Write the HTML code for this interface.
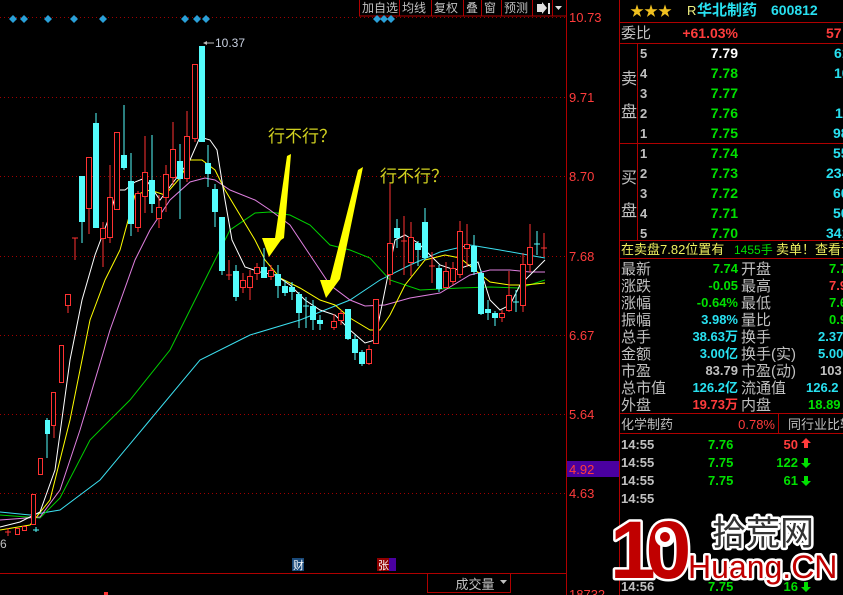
<!DOCTYPE html>
<html><head><meta charset="utf-8"><style>
html,body{margin:0;padding:0;background:#000;width:843px;height:595px;overflow:hidden}
svg{display:block}
text{font-family:"Liberation Sans","Noto Sans CJK SC",sans-serif}
.g{fill:#c0c0c0}.r{fill:#ff3c3c}.gr{fill:#00e000}.c{fill:#28e0f0}.w{fill:#fff}.y{fill:#f0f060}
</style></head><body>
<svg width="843" height="595" viewBox="0 0 843 595" xmlns="http://www.w3.org/2000/svg">
<rect width="843" height="595" fill="#000"/>
<g stroke="#a00000" stroke-dasharray="1,3" stroke-width="1">
<line x1="0" y1="17.5" x2="566" y2="17.5"/><line x1="0" y1="97.5" x2="566" y2="97.5"/>
<line x1="0" y1="176.5" x2="566" y2="176.5"/><line x1="0" y1="256.5" x2="566" y2="256.5"/>
<line x1="0" y1="335.5" x2="566" y2="335.5"/><line x1="0" y1="414.5" x2="566" y2="414.5"/>
<line x1="0" y1="493.5" x2="566" y2="493.5"/>
</g>
<line x1="566.5" y1="0" x2="566.5" y2="595" stroke="#b00000"/>
<line x1="619.5" y1="0" x2="619.5" y2="595" stroke="#b00000"/>
<line x1="0" y1="573.5" x2="566" y2="573.5" stroke="#b00000"/>
<rect x="427.5" y="573.5" width="83" height="19" fill="none" stroke="#b00000"/>
<text x="475" y="589" class="g" font-size="13" text-anchor="middle">成交量</text>
<path d="M500 580h7l-3.5 4z" fill="#c0c0c0"/>
<g stroke="#b00000" fill="#000"><rect x="359.5" y="-1" width="207" height="17"/></g>
<g stroke="#b00000"><line x1="399.5" y1="0" x2="399.5" y2="16"/><line x1="431.5" y1="0" x2="431.5" y2="16"/><line x1="463.5" y1="0" x2="463.5" y2="16"/><line x1="481.5" y1="0" x2="481.5" y2="16"/><line x1="501.5" y1="0" x2="501.5" y2="16"/><line x1="532.5" y1="0" x2="532.5" y2="16"/><line x1="552.5" y1="0" x2="552.5" y2="16"/></g>
<g class="g" font-size="12"><text x="362" y="12">加自选</text><text x="402" y="12">均线</text><text x="434" y="12">复权</text><text x="466" y="12">叠</text><text x="484" y="12">窗</text><text x="504" y="12">预测</text></g>
<path d="M537 4h5v-2l5 6l-5 6v-2h-5z M548 3h2v11h-2z" fill="#e0e0e0"/>
<path d="M555 6h7l-3.5 4z" fill="#e0e0e0"/>
<g fill="#2aa0d8">
<path d="M13 15l4 4l-4 4l-4-4z"/><path d="M24 15l4 4l-4 4l-4-4z"/><path d="M48 15l4 4l-4 4l-4-4z"/><path d="M74 15l4 4l-4 4l-4-4z"/><path d="M103 15l4 4l-4 4l-4-4z"/><path d="M185 15l4 4l-4 4l-4-4z"/><path d="M197 15l4 4l-4 4l-4-4z"/><path d="M206 15l4 4l-4 4l-4-4z"/><path d="M377 15l4 4l-4 4l-4-4z"/><path d="M384 15l4 4l-4 4l-4-4z"/><path d="M391 15l4 4l-4 4l-4-4z"/>
</g>
<g class="r" font-size="13"><text x="569" y="22">10.73</text><text x="569" y="102">9.71</text><text x="569" y="181">8.70</text><text x="569" y="261">7.68</text><text x="569" y="340">6.67</text><text x="569" y="419">5.64</text><text x="569" y="498">4.63</text></g>
<rect x="567" y="461" width="52" height="16" fill="#4a00a0"/>
<text x="569" y="474" class="r" font-size="13">4.92</text>
<text x="569" y="599" class="r" font-size="13">18732</text>
<g fill="none" stroke-width="1">
<polyline stroke="#3ce0f0" points="0,512 30,515 60,510 100,480 150,420 200,360 250,335 300,320 350,300 380,280 410,265 440,252 470,245 500,250 545,258"/>
<polyline stroke="#00d000" points="0,515 40,518 60,498 90,440 130,400 170,350 200,290 230,230 255,213 270,212 290,215 310,225 330,245 350,250 370,258 390,280 420,290 460,288 490,287 520,288 545,280"/>
<polyline stroke="#e080e0" points="0,520 40,517 60,490 80,430 110,330 135,260 150,230 170,200 190,182 205,178 215,180 230,190 255,200 270,210 290,225 310,255 330,285 350,300 365,306 385,305 410,298 440,293 470,275 490,270 510,270 530,272 545,272"/>
<polyline stroke="#ffff00" points="0,530 30,525 50,500 70,420 90,320 105,280 120,250 135,195 150,190 165,195 180,178 190,160 202,160 215,170 225,190 240,215 255,240 265,260 280,278 300,288 320,300 335,305 350,318 370,330 380,330 390,315 405,285 425,260 445,255 460,258 475,270 490,282 510,285 525,285 545,283"/>
<polyline stroke="#ffffff" points="0,527 20,522 40,512 55,470 70,360 82,300 95,255 110,215 117,190 125,190 135,182 145,178 160,200 175,180 190,160 200,137 210,140 217,150 225,200 232,240 245,267 260,272 275,275 290,285 305,300 320,310 335,315 350,330 365,343 375,340 385,290 395,240 405,235 418,243 430,255 440,265 455,270 470,265 478,262 490,300 500,310 510,305 520,285 545,260"/>
</g>
<g stroke="#ff3232" fill="#000" stroke-width="1">
<line x1="68" y1="294" x2="68" y2="313"/><rect x="65.5" y="294.5" width="5" height="11"/>
<line x1="75" y1="238" x2="75" y2="260"/><line x1="72" y1="238" x2="78" y2="238"/>
<line x1="89" y1="157" x2="89" y2="234"/><rect x="86.5" y="157.5" width="5" height="51"/>
<line x1="103" y1="222" x2="103" y2="267"/><rect x="100.5" y="228.5" width="5" height="10"/>
<line x1="110" y1="165" x2="110" y2="243"/><rect x="107.5" y="197.5" width="5" height="40"/>
<line x1="117" y1="132" x2="117" y2="209"/><rect x="114.5" y="132.5" width="5" height="77"/>
<line x1="138" y1="191" x2="138" y2="232"/><rect x="135.5" y="193.5" width="5" height="34"/>
<line x1="145" y1="136" x2="145" y2="213"/><rect x="142.5" y="172.5" width="5" height="24"/>
<line x1="159" y1="195" x2="159" y2="228"/><rect x="156.5" y="207.5" width="5" height="11"/>
<line x1="166" y1="165" x2="166" y2="212"/><rect x="163.5" y="174.5" width="5" height="23"/>
<line x1="173" y1="122" x2="173" y2="185"/><rect x="170.5" y="149.5" width="5" height="28"/>
<line x1="187" y1="111" x2="187" y2="182"/><rect x="184.5" y="136.5" width="5" height="42"/>
<line x1="195" y1="64" x2="195" y2="142"/><rect x="192.5" y="64.5" width="5" height="74"/>
<line x1="229" y1="260" x2="229" y2="280"/><line x1="226" y1="275" x2="232" y2="275"/>
<line x1="243" y1="273" x2="243" y2="293"/><rect x="240.5" y="280.5" width="5" height="7"/>
<line x1="250" y1="270" x2="250" y2="300"/><rect x="247.5" y="276.5" width="5" height="11"/>
<line x1="257" y1="263" x2="257" y2="280"/><rect x="254.5" y="267.5" width="5" height="6"/>
<line x1="271" y1="265" x2="271" y2="280"/><rect x="268.5" y="270.5" width="5" height="6"/>
<line x1="334" y1="314" x2="334" y2="330"/><rect x="331.5" y="321.5" width="5" height="6"/>
<line x1="341" y1="310" x2="341" y2="325"/><rect x="338.5" y="313.5" width="5" height="7"/>
<line x1="369" y1="345" x2="369" y2="365"/><rect x="366.5" y="349.5" width="5" height="14"/>
<rect x="373.5" y="299.5" width="5" height="44"/>
<line x1="390" y1="183" x2="390" y2="285"/><rect x="387.5" y="243.5" width="5" height="31"/>
<line x1="404" y1="216" x2="404" y2="275"/><line x1="401" y1="241" x2="407" y2="241"/>
<line x1="411" y1="222" x2="411" y2="276"/><rect x="408.5" y="237.5" width="5" height="25"/>
<line x1="432" y1="252" x2="432" y2="283"/><line x1="429" y1="266" x2="435" y2="266"/>
<line x1="446" y1="262" x2="446" y2="287"/><rect x="443.5" y="271.5" width="5" height="16"/>
<line x1="453" y1="262" x2="453" y2="285"/><rect x="450.5" y="268.5" width="5" height="13"/>
<line x1="460" y1="221" x2="460" y2="278"/><rect x="457.5" y="231.5" width="5" height="43"/>
<line x1="467" y1="224" x2="467" y2="267"/><rect x="464.5" y="244.5" width="5" height="4"/>
<line x1="502" y1="310" x2="502" y2="322"/><rect x="499.5" y="313.5" width="5" height="4"/>
<line x1="509" y1="271" x2="509" y2="312"/><rect x="506.5" y="295.5" width="5" height="15"/>
<line x1="523" y1="253" x2="523" y2="312"/><rect x="520.5" y="264.5" width="5" height="41"/>
<line x1="530" y1="224" x2="530" y2="272"/><rect x="527.5" y="247.5" width="5" height="17"/>
<line x1="544" y1="233" x2="544" y2="257"/><line x1="541" y1="248" x2="547" y2="248"/>
<rect x="31.5" y="494.5" width="4" height="30"/>
<line x1="8" y1="528" x2="8" y2="536"/><line x1="5" y1="532" x2="11" y2="532"/>
<rect x="15.5" y="528.5" width="4" height="6"/><rect x="22.5" y="526.5" width="4" height="4"/>
<rect x="38.5" y="458.5" width="4" height="16"/>
<line x1="54" y1="392" x2="54" y2="438"/><rect x="51.5" y="392.5" width="4" height="33"/>
<line x1="61" y1="345" x2="61" y2="382"/><rect x="59.5" y="345.5" width="4" height="37"/>
</g>
<g fill="#54fcfc" stroke="#54fcfc">
<line x1="47" y1="418" x2="47" y2="458"/><rect x="45.5" y="420.5" width="4" height="13"/>
<line x1="82" y1="176" x2="82" y2="243"/><rect x="79.5" y="176.5" width="5" height="45"/>
<line x1="96" y1="113" x2="96" y2="227"/><rect x="93.5" y="123.5" width="5" height="104"/>
<line x1="124" y1="105" x2="124" y2="170"/><rect x="121.5" y="155.5" width="5" height="12"/>
<line x1="131" y1="153" x2="131" y2="236"/><rect x="128.5" y="181.5" width="5" height="42"/>
<line x1="152" y1="135" x2="152" y2="213"/><rect x="149.5" y="180.5" width="5" height="23"/>
<line x1="180" y1="144" x2="180" y2="219"/><rect x="177.5" y="161.5" width="5" height="17"/>
<line x1="202" y1="46" x2="202" y2="142"/><rect x="199.5" y="46.5" width="5" height="95"/>
<line x1="208" y1="145" x2="208" y2="187"/><rect x="205.5" y="163.5" width="5" height="10"/>
<line x1="215" y1="184" x2="215" y2="227"/><rect x="212.5" y="189.5" width="5" height="22"/>
<line x1="222" y1="217" x2="222" y2="275"/><rect x="219.5" y="217.5" width="5" height="53"/>
<line x1="236" y1="265" x2="236" y2="301"/><rect x="233.5" y="271.5" width="5" height="25"/>
<line x1="264" y1="248" x2="264" y2="277"/><rect x="261.5" y="267.5" width="5" height="10"/>
<line x1="278" y1="265" x2="278" y2="298"/><rect x="275.5" y="274.5" width="5" height="11"/>
<line x1="285" y1="280" x2="285" y2="296"/><rect x="282.5" y="286.5" width="5" height="6"/>
<line x1="292" y1="282" x2="292" y2="300"/><rect x="289.5" y="287.5" width="5" height="4"/>
<line x1="299" y1="292" x2="299" y2="328"/><rect x="296.5" y="294.5" width="5" height="18"/>
<line x1="306" y1="297" x2="306" y2="328"/><line x1="303" y1="306" x2="309" y2="306"/>
<line x1="313" y1="300" x2="313" y2="330"/><rect x="310.5" y="306.5" width="5" height="13"/>
<line x1="320" y1="315" x2="320" y2="330"/><rect x="317.5" y="320.5" width="5" height="3"/>
<line x1="348" y1="309" x2="348" y2="340"/><rect x="345.5" y="309.5" width="5" height="29"/>
<line x1="355" y1="335" x2="355" y2="360"/><rect x="352.5" y="339.5" width="5" height="13"/>
<line x1="362" y1="350" x2="362" y2="366"/><rect x="359.5" y="352.5" width="5" height="11"/>
<line x1="397" y1="219" x2="397" y2="248"/><rect x="394.5" y="228.5" width="5" height="9"/>
<line x1="418" y1="241" x2="418" y2="266"/><rect x="415.5" y="243.5" width="5" height="6"/>
<line x1="425" y1="208" x2="425" y2="260"/><rect x="422.5" y="222.5" width="5" height="35"/>
<line x1="439" y1="265" x2="439" y2="292"/><rect x="436.5" y="268.5" width="5" height="20"/>
<line x1="474" y1="235" x2="474" y2="275"/><rect x="471.5" y="246.5" width="5" height="25"/>
<line x1="481" y1="270" x2="481" y2="315"/><rect x="478.5" y="273.5" width="5" height="40"/>
<line x1="488" y1="300" x2="488" y2="320"/><rect x="485.5" y="309.5" width="5" height="3"/>
<line x1="495" y1="311" x2="495" y2="326"/><rect x="492.5" y="313.5" width="5" height="4"/>
<line x1="516" y1="290" x2="516" y2="312"/><line x1="513" y1="302" x2="519" y2="302"/>
<line x1="537" y1="231" x2="537" y2="255"/><line x1="534" y1="244" x2="540" y2="244"/>
<line x1="36" y1="527" x2="36" y2="532"/><line x1="33" y1="530" x2="39" y2="530"/>
</g>
<text x="0" y="548" class="g" font-size="12">6</text>
<line x1="204" y1="43" x2="214" y2="43" stroke="#bbb"/><path d="M203 43l4-2v4z" fill="#bbb"/>
<text x="215" y="47" fill="#c8d0e0" font-size="12">10.37</text>
<polygon fill="#ffff00" points="291,154 284,238 281,240 269,257 262,238 275,238 287,156"/>
<polygon fill="#ffff00" points="363,167 340,279 326,298 320,280 330,280 358,170"/>
<text x="268" y="142" fill="#d0d020" font-size="17">行不行？</text>
<text x="380" y="182" fill="#d0d020" font-size="17">行不行？</text>
<rect x="292" y="558" width="12" height="13" fill="#1a4a7a"/><text x="293" y="569" class="w" font-size="11">财</text>
<rect x="377" y="558" width="12" height="13" fill="#900000"/><rect x="389" y="558" width="7" height="13" fill="#4a00a0"/><text x="378" y="569" class="w" font-size="11">张</text>
<rect x="104" y="592" width="4" height="3" fill="#ff3232"/>

<g fill="#f0c020"><text x="630" y="16" font-size="14">★★★</text></g>
<text x="687" y="15" fill="#f0f080" font-size="13">R</text>
<text x="697" y="15" fill="#28e0f0" font-size="15" font-weight="bold">华北制药</text>
<text x="771" y="15" fill="#28e0f0" font-size="14" font-weight="bold">600812</text>
<g stroke="#b00000"><line x1="619" y1="22.5" x2="843" y2="22.5"/><line x1="619" y1="43.5" x2="843" y2="43.5"/><line x1="619" y1="143.5" x2="843" y2="143.5"/><line x1="619" y1="240.5" x2="843" y2="240.5"/><line x1="619" y1="258.5" x2="843" y2="258.5"/><line x1="619" y1="413.5" x2="843" y2="413.5"/><line x1="619" y1="433.5" x2="843" y2="433.5"/><line x1="637.5" y1="43" x2="637.5" y2="240" /><line x1="778.5" y1="413" x2="778.5" y2="433"/></g>
<text x="621" y="38" class="g" font-size="15">委比</text>
<text x="738" y="38" class="r" font-size="14" font-weight="bold" text-anchor="end">+61.03%</text>
<text x="826" y="38" class="r" font-size="14" font-weight="bold">57</text>
<g class="g" font-size="16"><text x="621" y="84">卖</text><text x="621" y="117">盘</text><text x="621" y="183">买</text><text x="621" y="216">盘</text></g>
<g class="g" font-size="13" font-weight="bold">
<text x="640" y="58">5</text><text x="640" y="78">4</text><text x="640" y="98">3</text><text x="640" y="118">2</text><text x="640" y="138">1</text>
<text x="640" y="158">1</text><text x="640" y="178">2</text><text x="640" y="198">3</text><text x="640" y="218">4</text><text x="640" y="238">5</text></g>
<g font-size="14" font-weight="bold" text-anchor="end">
<text x="738" y="58" class="w">7.79</text><text x="738" y="78" class="gr">7.78</text><text x="738" y="98" class="gr">7.77</text><text x="738" y="118" class="gr">7.76</text><text x="738" y="138" class="gr">7.75</text>
<text x="738" y="158" class="gr">7.74</text><text x="738" y="178" class="gr">7.73</text><text x="738" y="198" class="gr">7.72</text><text x="738" y="218" class="gr">7.71</text><text x="738" y="238" class="gr">7.70</text></g>
<g font-size="14" font-weight="bold" class="c">
<text x="834" y="58">61</text><text x="834" y="78">10</text><text x="835" y="118">11</text><text x="833" y="138">98</text>
<text x="833" y="158">55</text><text x="826" y="178">234</text><text x="833" y="198">60</text><text x="833" y="218">50</text><text x="826" y="238">341</text></g>
<text x="621" y="254" class="y" font-size="13">在卖盘7.82位置有</text>
<text x="734" y="254" class="gr" font-size="12">1455手</text>
<text x="776" y="254" class="y" font-size="13">卖单！查看详</text>
<g class="g" font-size="15">
<text x="621" y="274">最新</text><text x="621" y="291">涨跌</text><text x="621" y="308">涨幅</text><text x="621" y="325">振幅</text><text x="621" y="342">总手</text><text x="621" y="359">金额</text><text x="621" y="376">市盈</text><text x="621" y="393">总市值</text><text x="621" y="410">外盘</text>
<text x="741" y="274">开盘</text><text x="741" y="291">最高</text><text x="741" y="308">最低</text><text x="741" y="325">量比</text><text x="741" y="342">换手</text><text x="741" y="359">换手(实)</text><text x="741" y="376">市盈(动)</text><text x="741" y="393">流通值</text><text x="741" y="410">内盘</text></g>
<g font-size="13" font-weight="bold" text-anchor="end">
<text x="738" y="273" class="gr">7.74</text><text x="738" y="290" class="gr">-0.05</text><text x="738" y="307" class="gr">-0.64%</text><text x="738" y="324" class="c">3.98%</text><text x="738" y="341" class="c">38.63万</text><text x="738" y="358" class="c">3.00亿</text><text x="738" y="375" class="g">83.79</text><text x="738" y="392" class="c">126.2亿</text><text x="738" y="409" class="r">19.73万</text></g>
<g font-size="13" font-weight="bold">
<text x="829" y="273" class="gr">7.7</text><text x="829" y="290" class="r">7.9</text><text x="829" y="307" class="gr">7.6</text><text x="829" y="324" class="gr">0.9</text><text x="818" y="341" class="c">2.37</text><text x="818" y="358" class="c">5.00</text><text x="820" y="375" class="g">103</text><text x="806" y="392" class="c">126.2</text><text x="808" y="409" class="gr">18.89</text></g>
<text x="621" y="429" class="g" font-size="13">化学制药</text>
<text x="775" y="429" class="r" font-size="13" text-anchor="end">0.78%</text>
<text x="788" y="429" class="g" font-size="13">同行业比较</text>
<g class="g" font-size="13" font-weight="bold"><text x="621" y="449">14:55</text><text x="621" y="467">14:55</text><text x="621" y="485">14:55</text><text x="621" y="503">14:55</text><text x="621" y="591">14:56</text></g>
<g class="gr" font-size="13" font-weight="bold"><text x="708" y="449">7.76</text><text x="708" y="467">7.75</text><text x="708" y="485">7.75</text><text x="708" y="591">7.75</text></g>
<text x="798" y="449" class="r" font-size="13" font-weight="bold" text-anchor="end">50</text>
<text x="798" y="467" class="gr" font-size="13" font-weight="bold" text-anchor="end">122</text>
<text x="798" y="485" class="gr" font-size="13" font-weight="bold" text-anchor="end">61</text>
<text x="798" y="591" class="gr" font-size="13" font-weight="bold" text-anchor="end">16</text>
<path d="M806 438l5 5h-3v5h-4v-5h-3z" fill="#ff3c3c"/>
<path d="M806 468l5-5h-3v-5h-4v5h-3z" fill="#00e000"/>
<path d="M806 486l5-5h-3v-5h-4v5h-3z" fill="#00e000"/>
<path d="M806 592l5-5h-3v-5h-4v5h-3z" fill="#00e000"/>
<g stroke="#fff" stroke-width="5" paint-order="stroke" stroke-linejoin="round">
<text x="610" y="578" fill="#c00000" font-size="82" font-weight="bold" font-family="Liberation Sans" letter-spacing="-10">10</text>
<text x="712" y="545" fill="#333" font-size="34">拾荒网</text>
<text x="688" y="578" fill="#c00000" font-size="32">Huang.CN</text>
</g>
<circle cx="665" cy="537" r="10" fill="#fff"/><circle cx="665" cy="537" r="5" fill="#c00000"/>
</svg>
</body></html>
